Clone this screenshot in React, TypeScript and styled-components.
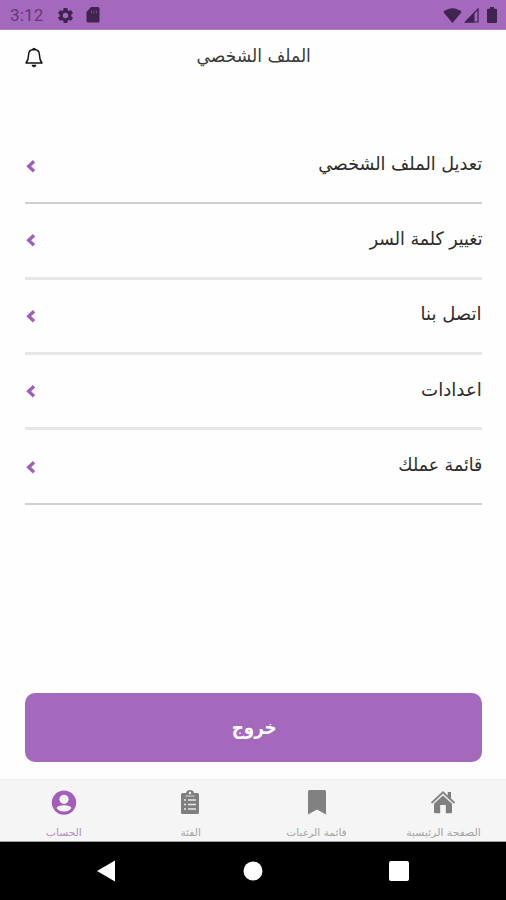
import React from "react";
import styled, { createGlobalStyle } from "styled-components";

const Global = createGlobalStyle`
  *, *::before, *::after { box-sizing: border-box; }
  body { margin: 0; background: #fff; }
`;

const Screen = styled.div`
  width: 506px;
  height: 900px;
  display: flex;
  flex-direction: column;
  background: #fefefe;
  overflow: hidden;
  font-family: "DejaVu Sans", sans-serif;
`;

const StatusBar = styled.div`
  height: 30px;
  flex: none;
  display: flex;
  justify-content: space-between;
  padding: 1px 9px 0 10px;
  background: #a468bd;
  border-bottom: 1px solid #b17fc7;
  color: #3f2450;
`;

const StatusGroup = styled.div<{ $gap: number }>`
  display: flex;
  align-items: center;
  gap: ${(p) => p.$gap}px;
`;

const SignalPair = styled.div`
  display: flex;
  gap: 2px;
  margin-right: 8px;
`;

const Clock = styled.span`
  width: 34px;
  margin-right: 1px;
  font: 17px/28px Roboto, sans-serif;
  letter-spacing: 0.2px;
  color: #633a78;
`;

const Header = styled.header`
  height: 99px;
  flex: none;
  display: grid;
  grid-template-columns: 60px 1fr 60px;
  align-items: start;
`;

const BellButton = styled.button`
  border: 0;
  background: none;
  padding: 17px 0 0 24px;
  display: flex;
`;

const Title = styled.h1`
  margin: 0;
  padding: 10px 0 0 2px;
  text-align: center;
  font-size: 17px;
  line-height: 32px;
  font-weight: 400;
  color: #3a3a3a;
`;

const Fit = styled.span<{ $x: number; $y?: number; $origin?: string }>`
  display: inline-block;
  white-space: nowrap;
  transform: scale(${(p) => p.$x}, ${(p) => p.$y ?? 1});
  transform-origin: ${(p) => p.$origin ?? "center"};
`;

const Menu = styled.ul`
  list-style: none;
  margin: 0 24px 0 25px;
  padding: 0;
`;

const MenuRow = styled.li<{ $fine?: boolean }>`
  height: 75.3px;
  display: flex;
  align-items: center;
  justify-content: space-between;
  direction: rtl;
  font-size: 17px;
  color: #2c2c2c;
  border-bottom: ${(p) => (p.$fine ? "2px solid #d0d0d0" : "3px solid #e6e6e6")};
`;

const RowLabel = styled.span`
  padding-bottom: 3px;
`;

const LogoutButton = styled.button`
  margin: auto 24px 17px 25px;
  height: 69px;
  flex: none;
  border: 0;
  border-radius: 10px;
  background: #a468bd;
  color: #fff;
  padding: 0 0 2px 1px;
  font: 700 18px "DejaVu Sans", sans-serif;
`;

const TabBar = styled.nav`
  height: 63px;
  flex: none;
  display: grid;
  grid-template-columns: repeat(4, 126.5px);
  background: #f5f5f5;
  border-top: 1px solid #eeeeee;
  border-bottom: 1px solid #a0a0a0;
  overflow: hidden;
`;

const Tab = styled.div<{ $active?: boolean }>`
  display: flex;
  flex-direction: column;
  align-items: center;
  padding: 9px 0 0 1px;
  gap: 8px;
  font-size: 10px;
  line-height: 16px;
  color: ${(p) => (p.$active ? "#b78bc9" : "#a3a3a3")};
`;

const NavBar = styled.div`
  height: 58px;
  flex: none;
  display: grid;
  grid-template-columns: repeat(3, 146px);
  justify-content: center;
  align-items: center;
  justify-items: center;
  background: #000;
`;

const Chevron = () => (
  <svg width="13" height="16" viewBox="0 0 13 16">
    <path d="M9 3.300 3.700 8.300 9 13.300" fill="none" stroke="#9f5fb9" strokeWidth="3.300" />
  </svg>
);

const Gear = () => (
  <svg width="19" height="19" viewBox="0 0 24 24">
    <path d="M19.14 12.94c.04-.3.06-.61.06-.94 0-.32-.02-.64-.07-.94l2.03-1.58a.49.49 0 0 0 .12-.61l-1.92-3.32a.49.49 0 0 0-.59-.22l-2.39.96c-.5-.38-1.03-.7-1.62-.94l-.36-2.54a.48.48 0 0 0-.48-.41h-3.84a.47.47 0 0 0-.47.41l-.36 2.54c-.59.24-1.13.57-1.62.94l-2.39-.96a.48.48 0 0 0-.59.22L2.74 8.87a.47.47 0 0 0 .12.61l2.03 1.58c-.05.3-.09.63-.09.94s.02.64.07.94l-2.03 1.58a.49.49 0 0 0-.12.61l1.92 3.32c.12.22.37.29.59.22l2.39-.96c.5.38 1.03.7 1.62.94l.36 2.54c.05.24.24.41.48.41h3.84c.24 0 .44-.17.47-.41l.36-2.54c.59-.24 1.13-.56 1.62-.94l2.39.96c.22.08.47 0 .59-.22l1.92-3.32a.47.47 0 0 0-.12-.61z" fill="currentColor" />
    <circle cx="12" cy="12" r="3.400" fill="#a468bd" />
  </svg>
);

const SdCard = () => (
  <svg width="14" height="16" viewBox="0 0 14 16">
    <path d="M5 0h7q1.500 0 1.500 1.500v12.500q0 1.500-1.500 1.500H2Q.5 15.500.5 14V5z" fill="currentColor" />
    <path d="M5.500 3.500v3M8 3.500v3M10.500 3.500v3" stroke="#754590" strokeWidth="1" />
  </svg>
);

const Wifi = () => (
  <svg width="19" height="15" viewBox="0 0 19 15">
    <path d="M.3 4Q9.500-3.500 18.700 4L9.500 15z" fill="currentColor" />
  </svg>
);

const Signal = () => (
  <svg width="15" height="15" viewBox="0 0 15 15">
    <path d="M14 1v13H1.500z" fill="none" stroke="currentColor" strokeWidth="1.200" />
    <path d="M10.500 4v10.500H.5z" fill="currentColor" />
  </svg>
);

const Battery = () => (
  <svg width="10" height="16" viewBox="0 0 10 16">
    <path d="M3 0h4v1.700h2q1 0 1 1V15q0 1-1 1H1q-1 0-1-1V2.700q0-1 1-1h2z" fill="currentColor" />
  </svg>
);

const Bell = () => (
  <svg width="20" height="22" viewBox="0 0 20 22">
    <path d="M10 2.500c-3.800 0-5.500 2.600-5.500 5.700 0 4.500-.7 5.300-2.500 7.800h16c-1.800-2.500-2.500-3.300-2.500-7.800 0-3.100-1.700-5.700-5.500-5.700z" fill="none" stroke="#111" strokeWidth="1.500" strokeLinejoin="round" />
    <path d="M8.300 2.200Q10-.2 11.700 2.200zM7.800 18h4.400Q11.700 20 10 20T7.800 18z" fill="#111" stroke="#111" strokeWidth=".5" />
  </svg>
);

const Account = () => (
  <svg width="26" height="28" viewBox="0 0 26 28">
    <circle cx="13" cy="13.600" r="12.200" fill="#a35dbb" />
    <circle cx="13" cy="10.300" r="4.600" fill="#f8f5fa" />
    <path d="M5.500 19Q7 16.200 13 16.200t7.500 2.800Q18 22.500 13 22.500t-7.500-3.500z" fill="#f8f5fa" />
  </svg>
);

const Clipboard = () => (
  <svg width="20" height="28" viewBox="0 0 20 28">
    <path d="M2.500 4H6q.5-3 4-3t4 3h3.500q1.500 0 1.500 1.500v18q0 1.500-1.500 1.500h-15Q1 25 1 23.500v-18Q1 4 2.500 4z" fill="#7f7f7f" />
    <circle cx="10" cy="4" r="1.200" fill="#f5f5f5" />
    <path d="M5.500 7h9" stroke="#bdbdbd" strokeWidth="1.400" />
    <path d="M4 11h2M4 15.500h2M4 20h2M8 11h8M8 15.500h8M8 20h8" stroke="#e8e8e8" strokeWidth="1.600" />
  </svg>
);

const Bookmark = () => (
  <svg width="20" height="28" viewBox="0 0 20 28">
    <path d="M2.500 1h15Q19 1 19 2.500V25.500l-9-5L1 25.500V2.500Q1 1 2.500 1z" fill="#818181" />
  </svg>
);

const Home = () => (
  <svg width="26" height="28" viewBox="0 0 26 28">
    <path d="M1.500 14 13 3.300 24.500 14" fill="none" stroke="#858585" strokeWidth="1.900" />
    <path d="M17.800 3h3.200v8l-3.200-3zM4 14.800l9-8.400 9 8.400V23q0 1.200-1.200 1.200h-5V16h-5.600v8.200h-5Q4 24.200 4 23z" fill="#7f7f7f" />
  </svg>
);

const rows = [
  { label: "تعديل الملف الشخصي", x: 1.037, fine: true },
  { label: "تغيير كلمة السر", x: 1.02 },
  { label: "اتصل بنا", x: 1.06 },
  { label: "اعدادات", x: 1.07 },
  { label: "قائمة عملك", x: 1.02, fine: true },
];

const tabs = [
  { label: "الحساب", x: 1.07, icon: <Account />, active: true },
  { label: "الفئة", x: 1.06, icon: <Clipboard /> },
  { label: "قائمة الرغبات", x: 1.06, icon: <Bookmark /> },
  { label: "الصفحة الرئيسية", x: 1.08, icon: <Home /> },
];

export default function App() {
  return (
    <Screen>
      <Global />
      <StatusBar>
        <StatusGroup $gap={11}>
          <Clock>3:12</Clock>
          <Gear />
          <SdCard />
        </StatusGroup>
        <StatusGroup $gap={0}>
          <SignalPair>
            <Wifi />
            <Signal />
          </SignalPair>
          <Battery />
        </StatusGroup>
      </StatusBar>
      <Header>
        <BellButton aria-label="notifications"><Bell /></BellButton>
        <Title><Fit $x={1.01} $y={1.06}>الملف الشخصي</Fit></Title>
      </Header>
      <Menu>
        {rows.map((r) => (
          <MenuRow key={r.label} $fine={r.fine}>
            <RowLabel><Fit $x={r.x} $y={1.08} $origin="right center">{r.label}</Fit></RowLabel>
            <Chevron />
          </MenuRow>
        ))}
      </Menu>
      <LogoutButton><Fit $x={0.93} $y={1.08}>خروج</Fit></LogoutButton>
      <TabBar>
        {tabs.map((t) => (
          <Tab key={t.label} $active={t.active}>
            {t.icon}
            <Fit $x={t.x}>{t.label}</Fit>
          </Tab>
        ))}
      </TabBar>
      <NavBar>
        <svg width="22" height="22" viewBox="0 0 22 22"><path d="M1 11 19 .5v21z" fill="#fff" /></svg>
        <svg width="20" height="20" viewBox="0 0 20 20"><circle cx="10" cy="10" r="9.500" fill="#fff" /></svg>
        <svg width="20" height="20" viewBox="0 0 20 20"><rect width="20" height="20" rx="2" fill="#fff" /></svg>
      </NavBar>
    </Screen>
  );
}
